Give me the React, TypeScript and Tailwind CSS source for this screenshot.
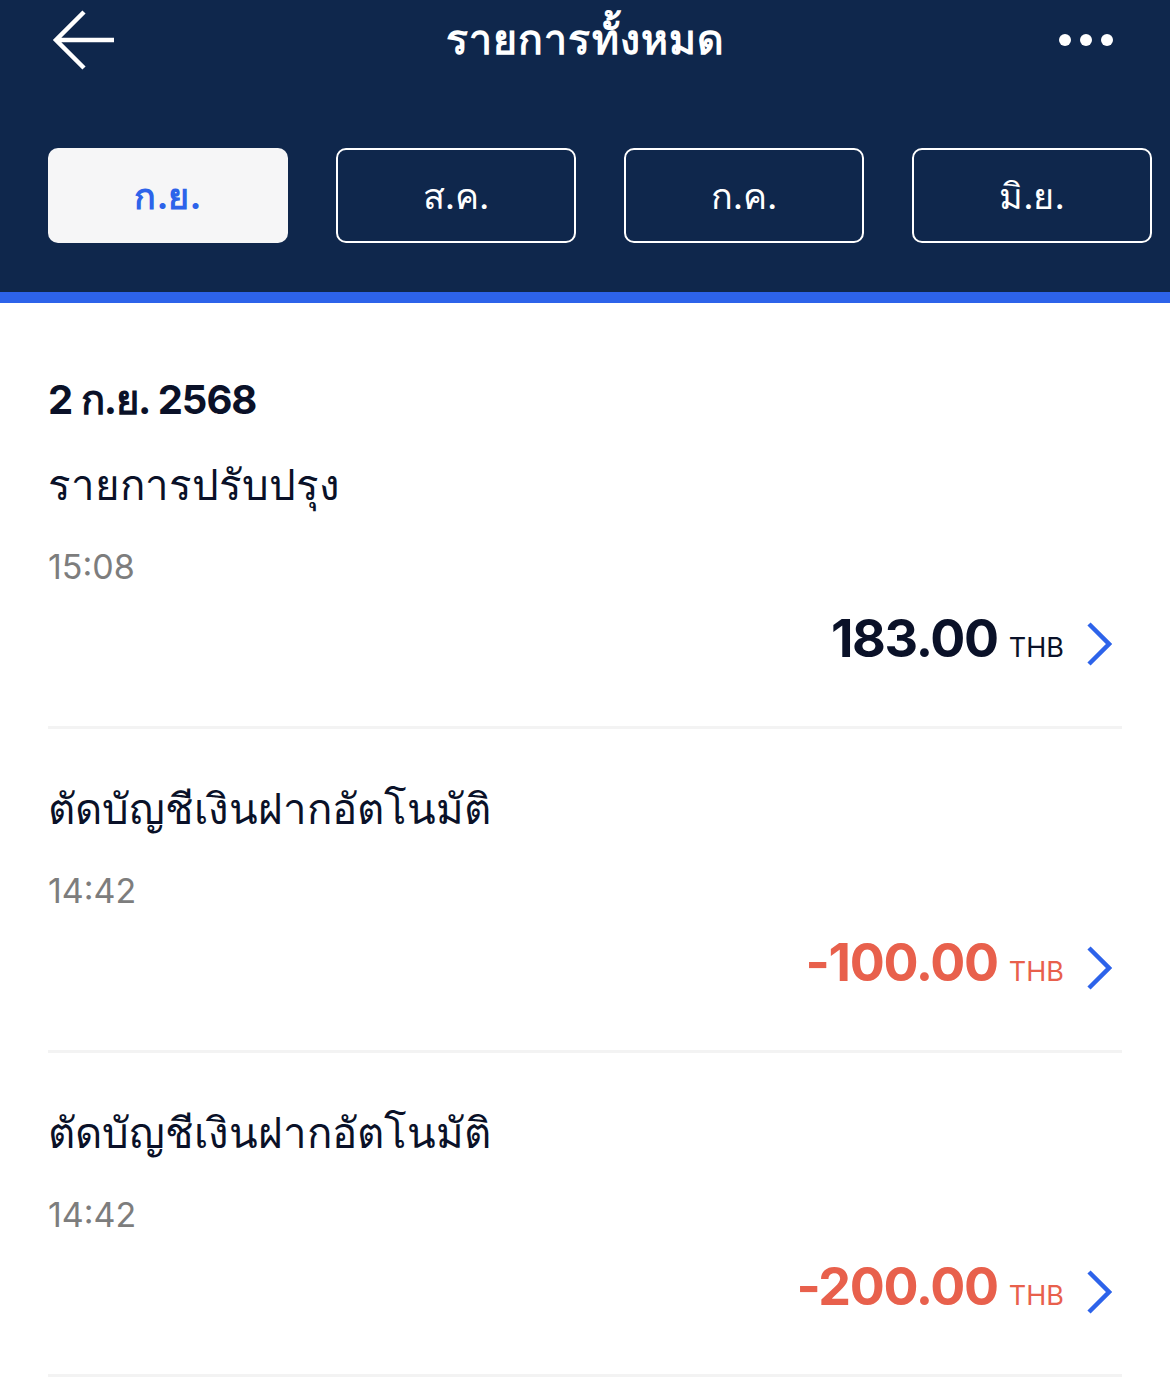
const items = [
  { date: "2 ก.ย. 2568", title: "รายการปรับปรุง", time: "15:08", amount: "183.00", negative: false },
  { date: "", title: "ตัดบัญชีเงินฝากอัตโนมัติ", time: "14:42", amount: "-100.00", negative: true },
  { date: "", title: "ตัดบัญชีเงินฝากอัตโนมัติ", time: "14:42", amount: "-200.00", negative: true },
];

const months = ["ก.ย.", "ส.ค.", "ก.ค.", "มิ.ย."];

function App() {
  return (
    <div className="min-h-screen bg-white font-['Inter','Noto_Sans',sans-serif]">
      <div className="bg-[#0f274c] px-12">
        <div className="h-[80px] flex items-center justify-between">
          <svg width="64" height="60" viewBox="0 0 64 60" className="ml-[4px]">
            <path d="M62 30H4M32 2L4 30l28 28" stroke="white" strokeWidth="4.5" fill="none" />
          </svg>
          <h1 className="text-white text-[41px] font-bold tracking-wide mr-[4px]">รายการทั้งหมด</h1>
          <div className="flex gap-[9px] pr-[9px]">
            <span className="w-[12px] h-[12px] rounded-full bg-white" />
            <span className="w-[12px] h-[12px] rounded-full bg-white" />
            <span className="w-[12px] h-[12px] rounded-full bg-white" />
          </div>
        </div>
        <div className="flex gap-12 pt-[68px] pb-[49px] -mr-[30px]">
          {months.map((m, i) => (
            <button
              key={m}
              className={
                i === 0
                  ? "w-[240px] h-[95px] rounded-[10px] bg-[#f6f6f7] text-[#2d63ea] text-[36px] font-bold"
                  : "w-[240px] h-[95px] rounded-[10px] border-2 border-white text-white text-[36px]"
              }
            >
              {m}
            </button>
          ))}
        </div>
      </div>
      <div className="h-[11px] bg-[#2d63ea]" />
      <div className="px-12 pt-[77px]">
        {items.map((it, i) => (
          <div key={i} className={i === 0 ? "" : "pt-[59px]"}>
            {it.date && (
              <div className="text-[40px] font-bold text-[#0a1128] leading-none tracking-tight mb-[44px]">{it.date}</div>
            )}
            <div className="text-[42px] text-[#0a1128] leading-none">{it.title}</div>
            <div className="text-[34px] text-[#7d7d7d] leading-none mt-[44px]">{it.time}</div>
            <div className="h-[50px] flex items-center justify-end mt-[30px] pr-[10px]">
              <div className={"flex items-baseline leading-none " + (it.negative ? "text-[#e8604c]" : "text-[#0a1128]")}>
                <span className="text-[52px] font-bold tracking-tight">{it.amount}</span>
                <span className="text-[27px] ml-[11px]">THB</span>
              </div>
              <svg width="26" height="44" viewBox="0 0 26 44" className="ml-[22px] mt-[10px]">
                <path d="M3 2l20 20L3 42" stroke="#2d63ea" strokeWidth="4.5" fill="none" />
              </svg>
            </div>
            <div className="h-[3px] bg-[#f3f3f3] mt-[62px]" />
          </div>
        ))}
      </div>
    </div>
  );
}

export default App;
